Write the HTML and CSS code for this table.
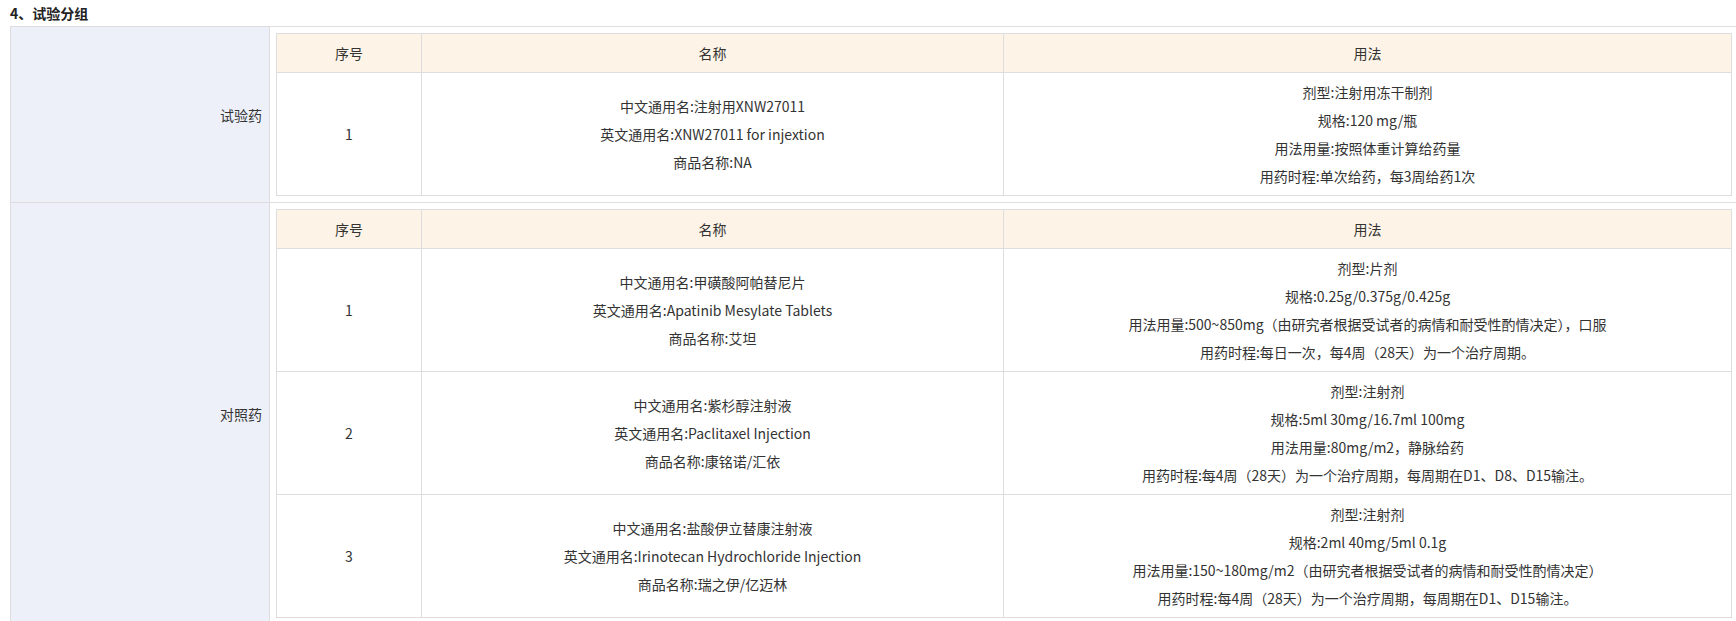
FILE: index.html
```html
<!DOCTYPE html>
<html lang="zh-CN">
<head>
<meta charset="utf-8">
<title>试验分组</title>
<link rel="stylesheet" href="styles.css">
</head>
<body>
<div class="page">
  <h3 class="section-title">4、试验分组</h3>
  <table class="group-table">
    <colgroup><col class="col-label"><col class="col-body"></colgroup>
    <tbody>
      <tr>
        <td class="group-label">试验药</td>
        <td class="group-body">
          <table class="drug-table">
            <colgroup><col class="c-no"><col class="c-name"><col class="c-use"></colgroup>
            <thead>
              <tr><th>序号</th><th>名称</th><th>用法</th></tr>
            </thead>
            <tbody>
              <tr>
                <td>1</td>
                <td>
                  <p>中文通用名:注射用XNW27011</p>
                  <p>英文通用名:XNW27011 for injextion</p>
                  <p>商品名称:NA</p>
                </td>
                <td>
                  <p>剂型:注射用冻干制剂</p>
                  <p>规格:120 mg/瓶</p>
                  <p>用法用量:按照体重计算给药量</p>
                  <p>用药时程:单次给药，每3周给药1次</p>
                </td>
              </tr>
            </tbody>
          </table>
        </td>
      </tr>
      <tr>
        <td class="group-label">对照药</td>
        <td class="group-body">
          <table class="drug-table">
            <colgroup><col class="c-no"><col class="c-name"><col class="c-use"></colgroup>
            <thead>
              <tr><th>序号</th><th>名称</th><th>用法</th></tr>
            </thead>
            <tbody>
              <tr>
                <td>1</td>
                <td>
                  <p>中文通用名:甲磺酸阿帕替尼片</p>
                  <p>英文通用名:Apatinib Mesylate Tablets</p>
                  <p>商品名称:艾坦</p>
                </td>
                <td>
                  <p>剂型:片剂</p>
                  <p>规格:0.25g/0.375g/0.425g</p>
                  <p>用法用量:500~850mg（由研究者根据受试者的病情和耐受性酌情决定），口服</p>
                  <p>用药时程:每日一次，每4周（28天）为一个治疗周期。</p>
                </td>
              </tr>
              <tr>
                <td>2</td>
                <td>
                  <p>中文通用名:紫杉醇注射液</p>
                  <p>英文通用名:Paclitaxel Injection</p>
                  <p>商品名称:康铭诺/汇依</p>
                </td>
                <td>
                  <p>剂型:注射剂</p>
                  <p>规格:5ml 30mg/16.7ml 100mg</p>
                  <p>用法用量:80mg/m2，静脉给药</p>
                  <p>用药时程:每4周（28天）为一个治疗周期，每周期在D1、D8、D15输注。</p>
                </td>
              </tr>
              <tr>
                <td>3</td>
                <td>
                  <p>中文通用名:盐酸伊立替康注射液</p>
                  <p>英文通用名:Irinotecan Hydrochloride Injection</p>
                  <p>商品名称:瑞之伊/亿迈林</p>
                </td>
                <td>
                  <p>剂型:注射剂</p>
                  <p>规格:2ml 40mg/5ml 0.1g</p>
                  <p>用法用量:150~180mg/m2（由研究者根据受试者的病情和耐受性酌情决定）</p>
                  <p>用药时程:每4周（28天）为一个治疗周期，每周期在D1、D15输注。</p>
                </td>
              </tr>
            </tbody>
          </table>
        </td>
      </tr>
    </tbody>
  </table>
</div>
</body>
</html>
```

FILE: styles.css
```css
html, body {
  margin: 0;
  padding: 0;
  overflow: hidden;
  background: #ffffff;
}

body {
  font-family: "Microsoft YaHei", "Noto Sans CJK SC", "Noto Sans", sans-serif;
  font-size: 14px;
  color: #333333;
}

.page {
  padding: 0 0 0 10px;
}

.section-title {
  margin: 0;
  padding: 3px 0 3px 0;
  font-size: 14px;
  line-height: 20px;
  font-weight: bold;
  color: #222222;
}

.group-table {
  width: 1728px;
  border-collapse: collapse;
  table-layout: fixed;
  border: 1px solid #dddddd;
}

.col-label {
  width: 259px;
}

.group-table > tbody > tr > td {
  border: 1px solid #dddddd;
}

.group-label {
  background: #edf0f8;
  text-align: right;
  vertical-align: middle;
  padding: 0 7px 0 0;
  color: #333333;
}

.group-body {
  padding: 6px;
  vertical-align: top;
}

.drug-table {
  width: 1455px;
  border-collapse: collapse;
  table-layout: fixed;
  border: 1px solid #dddddd;
}

.c-no { width: 145px; }
.c-name { width: 582px; }
.c-use { width: 728px; }

.drug-table th,
.drug-table td {
  border: 1px solid #dddddd;
  text-align: center;
  vertical-align: middle;
  padding: 5px;
  line-height: 28px;
  font-weight: normal;
}

.drug-table th {
  background: #fdf3e7;
}

.drug-table p {
  margin: 0;
}
```
